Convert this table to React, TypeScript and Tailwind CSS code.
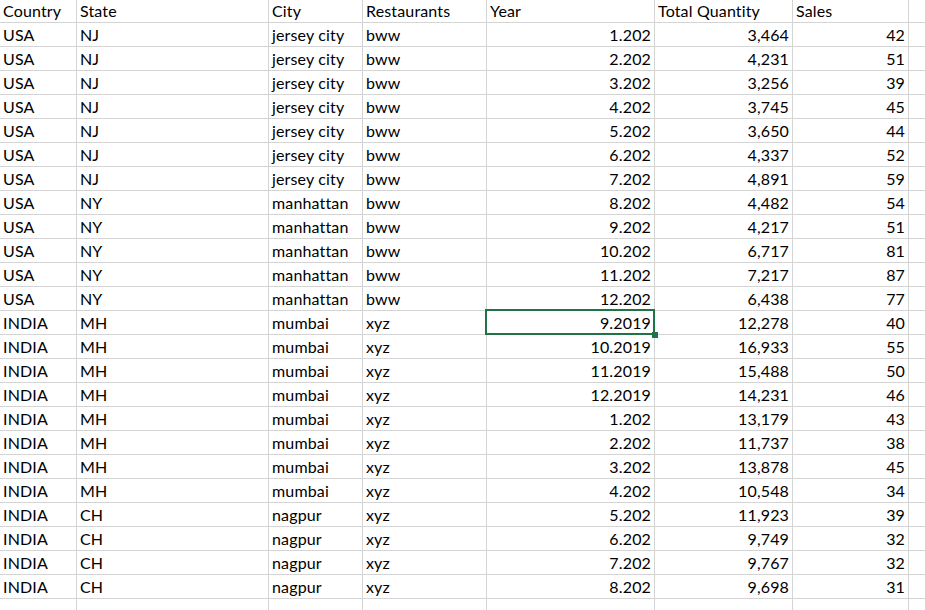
const headers = ['Country', 'State', 'City', 'Restaurants', 'Year', 'Total Quantity', 'Sales', '']

type Row = [string, string, string, string, string, string, string]

const rows: Row[] = [
  ['USA', 'NJ', 'jersey city', 'bww', '1.202', '3,464', '42'],
  ['USA', 'NJ', 'jersey city', 'bww', '2.202', '4,231', '51'],
  ['USA', 'NJ', 'jersey city', 'bww', '3.202', '3,256', '39'],
  ['USA', 'NJ', 'jersey city', 'bww', '4.202', '3,745', '45'],
  ['USA', 'NJ', 'jersey city', 'bww', '5.202', '3,650', '44'],
  ['USA', 'NJ', 'jersey city', 'bww', '6.202', '4,337', '52'],
  ['USA', 'NJ', 'jersey city', 'bww', '7.202', '4,891', '59'],
  ['USA', 'NY', 'manhattan', 'bww', '8.202', '4,482', '54'],
  ['USA', 'NY', 'manhattan', 'bww', '9.202', '4,217', '51'],
  ['USA', 'NY', 'manhattan', 'bww', '10.202', '6,717', '81'],
  ['USA', 'NY', 'manhattan', 'bww', '11.202', '7,217', '87'],
  ['USA', 'NY', 'manhattan', 'bww', '12.202', '6,438', '77'],
  ['INDIA', 'MH', 'mumbai', 'xyz', '9.2019', '12,278', '40'],
  ['INDIA', 'MH', 'mumbai', 'xyz', '10.2019', '16,933', '55'],
  ['INDIA', 'MH', 'mumbai', 'xyz', '11.2019', '15,488', '50'],
  ['INDIA', 'MH', 'mumbai', 'xyz', '12.2019', '14,231', '46'],
  ['INDIA', 'MH', 'mumbai', 'xyz', '1.202', '13,179', '43'],
  ['INDIA', 'MH', 'mumbai', 'xyz', '2.202', '11,737', '38'],
  ['INDIA', 'MH', 'mumbai', 'xyz', '3.202', '13,878', '45'],
  ['INDIA', 'MH', 'mumbai', 'xyz', '4.202', '10,548', '34'],
  ['INDIA', 'CH', 'nagpur', 'xyz', '5.202', '11,923', '39'],
  ['INDIA', 'CH', 'nagpur', 'xyz', '6.202', '9,749', '32'],
  ['INDIA', 'CH', 'nagpur', 'xyz', '7.202', '9,767', '32'],
  ['INDIA', 'CH', 'nagpur', 'xyz', '8.202', '9,698', '31'],
]

const cell = 'relative flex items-end border-r border-b border-[#d4d4d4] px-[3px] pb-[2px] whitespace-nowrap overflow-visible'

export default function App() {
  return (
    <div className="w-[926px] h-[610px] overflow-hidden bg-white text-black font-['Lato',sans-serif] text-[16px] leading-[19px] tracking-[0.15px]">
      <div className="grid grid-cols-[77px_192px_94px_124px_168px_138px_116px_1fr]">
        {headers.map((h, i) => (
          <div key={i} className={`${cell} h-[23px]`}>{h}</div>
        ))}
        {rows.map((r, ri) => (
          <>
            {r.map((v, ci) => (
              <div key={`${ri}-${ci}`} className={`${cell} h-[24px] ${ci >= 4 ? 'justify-end' : ''} ${ri === 12 && ci === 4 ? 'z-10' : ''}`}>
                {v}
                {ri === 12 && ci === 4 && (
                  <>
                    <div className="absolute -left-[2px] -top-[2px] -right-[1px] -bottom-[1px] border-2 border-[#217346]" />
                    <div className="absolute left-[165px] top-[21px] w-[6px] h-[6px] bg-[#217346]" />
                  </>
                )}
              </div>
            ))}
            <div key={`${ri}-x`} className={`${cell} h-[24px]`} />
          </>
        ))}
        {headers.map((_, i) => (
          <div key={`e${i}`} className="h-[24px] border-r border-[#d4d4d4]" />
        ))}
      </div>
    </div>
  )
}
